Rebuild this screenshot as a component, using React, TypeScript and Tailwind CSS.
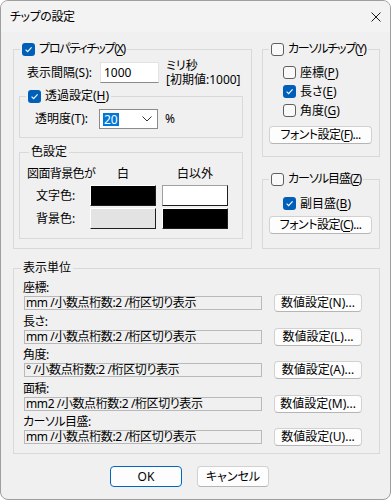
import React from "react";

const U = ({ c }: { c: string }) => (
  <span className="underline decoration-1 underline-offset-2">{c}</span>
);

function Check({ checked }: { checked?: boolean }) {
  return checked ? (
    <span className="flex h-[13px] w-[13px] shrink-0 items-center justify-center rounded-[3px] bg-[#005fb8]">
      <svg width="9" height="9" viewBox="0 0 9 9">
        <path d="M1.6 4.7 L3.6 6.7 L7.6 2.3" stroke="white" strokeWidth="1.1" fill="none" />
      </svg>
    </span>
  ) : (
    <span className="h-[13px] w-[13px] shrink-0 rounded-[3px] border border-[#5f5f5f] bg-[#f9f9f9]" />
  );
}

function Btn({ children, cls }: { children: React.ReactNode; cls: string }) {
  return (
    <button
      type="button"
      className={
        "flex items-center justify-center whitespace-nowrap rounded-[4px] border border-[#d1d1d1] border-b-[#b5b5b5] bg-[#fdfdfd] leading-[14px] " +
        cls
      }
    >
      {children}
    </button>
  );
}

const units = [
  { label: "座標:", text: "mm /小数点桁数:2 /桁区切り表示", key: "N" },
  { label: "長さ:", text: "mm /小数点桁数:2 /桁区切り表示", key: "L" },
  { label: "角度:", text: "° /小数点桁数:2 /桁区切り表示", key: "A" },
  { label: "面積:", text: "mm2 /小数点桁数:2 /桁区切り表示", key: "M" },
  { label: "カーソル目盛:", text: "mm /小数点桁数:2 /桁区切り表示", key: "U" },
];

export default function App() {
  return (
    <div className="h-[500px] w-[391px] font-['Noto_Sans','Noto_Sans_CJK_JP',sans-serif] text-[12px] leading-[14px] text-black [font-feature-settings:'palt']">
      <div className="flex h-[500px] w-[391px] flex-col overflow-hidden rounded-[8px] border border-[#9e9e9e] bg-[#f0f0f0]">
        {/* title bar */}
        <div className="flex h-[31px] shrink-0 items-center justify-between bg-[#f3f3f3] pl-[9px] pr-[9px]">
          <span className="tracking-[-0.4px]">チップの設定</span>
          <svg width="10" height="10" viewBox="0 0 10 10">
            <path d="M0.5 0.5L9.5 9.5M9.5 0.5L0.5 9.5" stroke="#1a1a1a" strokeWidth="1" />
          </svg>
        </div>

        <div className="flex flex-col pl-[12px] pr-[10px] pt-[10px]">
          <div className="flex gap-[10px]">
            {/* left group */}
            <fieldset className="w-[239px] border border-[#d9d9d9] pb-[9px]">
              <legend className="ml-[6px] flex h-[14px] items-center gap-[4px] px-[2px]">
                <Check checked />
                <span className="whitespace-nowrap tracking-[-1.2px]">
                  プロパティチップ(<U c="X" />)
                </span>
              </legend>
              <div className="mt-[6px] flex h-[21px] items-center pl-[13px]">
                <span className="w-[73px] whitespace-nowrap">表示間隔(S):</span>
                <div className="flex h-[21px] w-[59px] items-center border border-[#e3e3e3] border-b-[#8a8a8a] bg-white pl-[3px]">
                  1000
                </div>
                <div className="ml-[7px] flex flex-col whitespace-nowrap leading-[14px]">
                  <span>ミリ秒</span>
                  <span>[初期値:1000]</span>
                </div>
              </div>

              <fieldset className="ml-[5px] mt-[6px] w-[224px] border border-[#d9d9d9] pb-[8px]">
                <legend className="ml-[6px] flex h-[14px] items-center gap-[4px] px-[2px]">
                  <Check checked />
                  <span className="whitespace-nowrap">
                    透過設定(<U c="H" />)
                  </span>
                </legend>
                <div className="mt-[6px] flex h-[20px] items-center pl-[15px]">
                  <span className="w-[64px] whitespace-nowrap">透明度(T):</span>
                  <div className="flex h-[20px] w-[59px] items-center justify-between border border-[#8a8a8a] bg-white pl-[3px] pr-[5px]">
                    <span className="bg-[#0078d7] px-[1px] leading-[13px] text-white">20</span>
                    <svg width="10" height="6" viewBox="0 0 10 6">
                      <path d="M0.5 0.5 L5 5 L9.5 0.5" stroke="#333" strokeWidth="1" fill="none" />
                    </svg>
                  </div>
                  <span className="ml-[7px]">%</span>
                </div>
              </fieldset>

              <fieldset className="ml-[5px] mt-[7px] w-[224px] border border-[#d9d9d9] pb-[9px]">
                <legend className="ml-[9px] h-[14px] px-[2px]">色設定</legend>
                <div className="mt-[8px] grid h-[14px] grid-cols-[64px_66px_66px] gap-x-[6px]">
                  <span className="whitespace-nowrap pl-[7px] tracking-[-0.6px]">図面背景色が</span>
                  <span className="text-center">白</span>
                  <span className="text-center">白以外</span>
                </div>
                <div className="mt-[4px] grid h-[21px] grid-cols-[64px_66px_66px] items-center gap-x-[6px]">
                  <span className="pl-[16px]">文字色:</span>
                  <div className="h-[21px] border border-b-[#1e1e1e] border-l-white border-r-[#1e1e1e] border-t-white bg-black" />
                  <div className="h-[21px] border border-b-[#1e1e1e] border-l-[#a0a0a0] border-r-[#1e1e1e] border-t-[#a0a0a0] bg-white" />
                </div>
                <div className="mt-[2px] grid h-[21px] grid-cols-[64px_66px_66px] items-center gap-x-[6px]">
                  <span className="pl-[16px]">背景色:</span>
                  <div className="h-[21px] border border-b-[#1e1e1e] border-l-white border-r-[#1e1e1e] border-t-white bg-[#e3e3e3]" />
                  <div className="h-[21px] border border-b-[#1e1e1e] border-l-white border-r-[#1e1e1e] border-t-white bg-black" />
                </div>
              </fieldset>
            </fieldset>

            {/* right column */}
            <div className="flex w-[118px] flex-col">
              <fieldset className="border border-[#d9d9d9] pb-[12px]">
                <legend className="ml-[6px] flex h-[14px] items-center gap-[4px] px-[2px]">
                  <Check />
                  <span className="whitespace-nowrap tracking-[-1.2px]">
                    カーソルチップ(<U c="Y" />)
                  </span>
                </legend>
                <div className="mt-[7px] flex flex-col pl-[20px]">
                  <div className="flex h-[19px] items-center gap-[4px]">
                    <Check />
                    <span>
                      座標(<U c="P" />)
                    </span>
                  </div>
                  <div className="flex h-[19px] items-center gap-[4px]">
                    <Check checked />
                    <span>
                      長さ(<U c="E" />)
                    </span>
                  </div>
                  <div className="flex h-[19px] items-center gap-[4px]">
                    <Check />
                    <span>
                      角度(<U c="G" />)
                    </span>
                  </div>
                </div>
                <Btn cls="ml-[6px] mt-[6px] h-[18px] w-[103px] tracking-[-0.5px]">
                  フォント設定(<U c="F" />)...
                </Btn>
              </fieldset>

              <fieldset className="mt-[15px] flex-1 border border-[#d9d9d9]">
                <legend className="ml-[6px] flex h-[14px] items-center gap-[4px] px-[2px]">
                  <Check />
                  <span className="whitespace-nowrap tracking-[-1px]">
                    カーソル目盛(<U c="Z" />)
                  </span>
                </legend>
                <div className="mt-[8px] flex h-[19px] items-center gap-[4px] pl-[20px]">
                  <Check checked />
                  <span>
                    副目盛(<U c="B" />)
                  </span>
                </div>
                <Btn cls="ml-[6px] mt-[3px] h-[18px] w-[103px] tracking-[-0.5px]">
                  フォント設定(<U c="C" />)...
                </Btn>
              </fieldset>
            </div>
          </div>

          {/* units group */}
          <fieldset className="mt-[12px] w-[367px] border border-[#d9d9d9] pb-[7px]">
            <legend className="ml-[7px] h-[14px] px-[2px]">表示単位</legend>
            <div className="mt-[7px] flex flex-col gap-[3.5px] pl-[9px]">
              {units.map((u) => (
                <div key={u.key} className="flex flex-col">
                  <span className="h-[12px] whitespace-nowrap leading-[12px] tracking-[-0.5px]">{u.label}</span>
                  <div className="flex h-[18px] items-center">
                    <div className="ml-[1px] h-[14px] w-[238px] whitespace-nowrap border border-[#b9b9b9] bg-[#f0f0f0] pl-[1px] leading-[12px] tracking-[-0.4px]">
                      {u.text}
                    </div>
                    <Btn cls="ml-[12px] h-[18px] w-[88px]">
                      数値設定(<span>{u.key}</span>)...
                    </Btn>
                  </div>
                </div>
              ))}
            </div>
          </fieldset>

          {/* dialog buttons */}
          <div className="ml-[97px] mt-[12px] flex gap-[15px]">
            <button
              type="button"
              className="flex h-[21px] w-[72px] items-center justify-center rounded-[4px] border border-[#0067c0] bg-[#fdfdfd]"
            >
              OK
            </button>
            <button
              type="button"
              className="flex h-[21px] w-[72px] items-center justify-center rounded-[4px] border border-[#d1d1d1] border-b-[#b5b5b5] bg-[#fdfdfd]"
            >
              キャンセル
            </button>
          </div>
        </div>
      </div>
    </div>
  );
}
